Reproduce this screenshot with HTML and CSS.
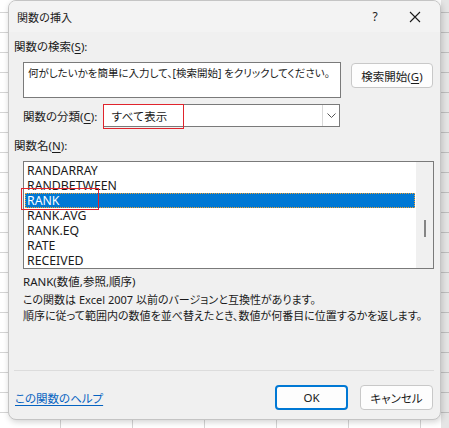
FILE: index.html
```html
<!DOCTYPE html>
<html lang="ja">
  <head>
    <meta charset="UTF-8" />
    <title>関数の挿入</title>
    <link rel="stylesheet" href="styles.css">
  </head>
  <body>
    <div class="dialog">
      <div class="titlebar">
        <span class="title">関数の挿入</span>
        <span class="title-help">?</span>
        <svg class="title-close" width="12" height="12" viewBox="0 0 12 12">
          <path d="M1 1 L11 11 M11 1 L1 11" stroke="#1a1a1a" stroke-width="1.1" fill="none" />
        </svg>
      </div>

      <div class="content">
        <div class="label">関数の検索(<u>S</u>):</div>
        <div class="search-row">
          <div class="search-box">何がしたいかを簡単に入力して、[検索開始] をクリックしてください。</div>
          <button class="button search-button">検索開始(<u>G</u>)</button>
        </div>

        <div class="category-row">
          <span class="category-label">関数の分類(<u>C</u>):</span>
          <div class="select">
            <span class="select-value">すべて表示</span>
            <span class="select-arrow">
              <svg width="9" height="5" viewBox="0 0 9 5">
                <path d="M0.5 0.5 L4.5 4.5 L8.5 0.5" stroke="#555" stroke-width="1" fill="none" />
              </svg>
            </span>
          </div>
        </div>

        <div class="label list-label">関数名(<u>N</u>):</div>
        <div class="listbox">
          <ul class="list-items">
            <li>RANDARRAY</li>
            <li>RANDBETWEEN</li>
            <li class="selected"><span class="mark">RANK</span></li>
            <li>RANK.AVG</li>
            <li>RANK.EQ</li>
            <li>RATE</li>
            <li>RECEIVED</li>
          </ul>
          <div class="scrollbar">
            <div class="scroll-thumb"></div>
          </div>
        </div>

        <div class="signature">RANK(数値,参照,順序)</div>
        <div class="description">
          <p>この関数は Excel 2007 以前のバージョンと互換性があります。</p>
          <p>順序に従って範囲内の数値を並べ替えたとき、数値が何番目に位置するかを返します。</p>
        </div>

        <div class="separator"></div>

        <div class="footer">
          <a class="help-link" href="#">この関数のヘルプ</a>
          <div class="footer-buttons">
            <button class="button button-default">OK</button>
            <button class="button">キャンセル</button>
          </div>
        </div>
      </div>
    </div>
  </body>
</html>
```

FILE: styles.css
```css
:root {
  --dialog-bg: #f0f0f0;
  --title-bg: #f3f3f3;
  --text: #1a1a1a;
  --border: #7a7a7a;
  --control-border: #c8c8c8;
  --accent: #0078d4;
  --link: #0563c1;
  --mark: #e0242c;
  --grid: #d4d4d4;
}

* {
  box-sizing: border-box;
  margin: 0;
  padding: 0;
}

body {
  width: 449px;
  height: 428px;
  overflow: hidden;
  font-family: "Noto Sans", "Noto Sans CJK JP", sans-serif;
  font-size: 12px;
  color: var(--text);
  background-color: #ffffff;
  background-image:
    linear-gradient(to right, rgba(0, 0, 0, 0.1), rgba(0, 0, 0, 0.1)),
    linear-gradient(to right, var(--grid) 1px, transparent 1px),
    linear-gradient(to bottom, var(--grid) 1px, transparent 1px);
  background-size: 8px 100%, 72px 20px, 72px 20px;
  background-position: 441px 0, 60px 12px, 60px 12px;
  background-repeat: no-repeat, repeat, repeat;
}

.dialog {
  margin-left: 8px;
  width: 433px;
  height: 420px;
  background-color: var(--dialog-bg);
  border: 1px solid #c4c4c4;
  border-radius: 8px;
  overflow: hidden;
  box-shadow: 1px 2px 6px rgba(0, 0, 0, 0.18);
  display: flex;
  flex-direction: column;
}

.titlebar {
  height: 31px;
  flex-shrink: 0;
  background-color: var(--title-bg);
  display: flex;
  align-items: center;
  padding-left: 8px;
}

.title {
  font-size: 11px;
  flex: 1;
}

.title-help {
  width: 14px;
  text-align: center;
  font-size: 12px;
  margin-right: 27px;
}

.title-close {
  margin-right: 19px;
}

.content {
  flex: 1;
  padding: 7px 6px 9px 5px;
  display: flex;
  flex-direction: column;
}

.cjk,
.label,
.category-label,
.description,
.help-link,
.button {
  font-feature-settings: "palt";
}

u {
  text-decoration-thickness: 1px;
  text-underline-offset: 2px;
}

.label {
  line-height: 16px;
  font-size: 11.5px;
}

.search-row {
  display: flex;
  align-items: flex-start;
  margin: 7px 0 0 9px;
}

.search-box {
  width: 318px;
  height: 36px;
  background-color: #ffffff;
  border: 1px solid var(--border);
  padding: 2px 4px;
  line-height: 16px;
  font-size: 10.5px;
  font-feature-settings: "palt";
  white-space: nowrap;
  overflow: hidden;
}

.button {
  font-family: inherit;
  font-size: 11.5px;
  color: var(--text);
  background-color: #fdfdfd;
  border: 1px solid var(--control-border);
  border-radius: 4px;
  height: 25px;
}

.search-button {
  margin: 1px 0 0 10px;
  width: 82px;
}

.category-row {
  display: flex;
  align-items: center;
  margin: 6px 0 0 9px;
}

.category-label {
  width: 80px;
  font-size: 11.5px;
  white-space: nowrap;
}

.select {
  width: 237px;
  height: 23px;
  background-color: #ffffff;
  border: 1px solid var(--border);
  display: flex;
  align-items: stretch;
}

.select-value {
  flex: 1;
  display: flex;
  align-items: center;
  position: relative;
  padding-left: 7px;
  font-size: 11.5px;
}

.select-value::after {
  content: "";
  position: absolute;
  left: -1px;
  top: -1px;
  width: 79px;
  height: 23px;
  border: 1.5px solid var(--mark);
}

.select-arrow {
  width: 17px;
  border-left: 1px solid #d8d8d8;
  display: flex;
  align-items: center;
  justify-content: center;
}

.list-label {
  margin-top: 11px;
}

.listbox {
  margin: 7px 0 0 9px;
  width: 411px;
  height: 108px;
  flex-shrink: 0;
  background-color: #ffffff;
  border: 1px solid var(--border);
  display: flex;
}

.list-items {
  list-style: none;
  flex: 1;
  padding: 1px 1px 0 1px;
}

.list-items li {
  height: 15px;
  line-height: 15px;
  padding-left: 2px;
  white-space: nowrap;
  font-size: 12.3px;
}

.list-items .selected {
  background-color: var(--accent);
  color: #ffffff;
  outline: 1px dotted #f0a030;
  outline-offset: -1px;
}

.mark {
  position: relative;
}

.mark::after {
  content: "";
  position: absolute;
  left: -6px;
  top: -4px;
  width: 76px;
  height: 20px;
  border: 1.5px solid var(--mark);
}

.scrollbar {
  width: 17px;
  background-color: var(--dialog-bg);
  display: flex;
  justify-content: center;
  padding-top: 58px;
}

.scroll-thumb {
  width: 2px;
  height: 17px;
  background-color: #858585;
}

.signature {
  margin: 5px 0 0 9px;
  line-height: 16px;
  font-size: 11.5px;
}

.description {
  margin: 2px 0 0 9px;
  line-height: 16px;
  font-size: 11px;
  white-space: nowrap;
}

.separator {
  margin-top: auto;
  height: 1px;
  flex-shrink: 0;
  background-color: #dcdcdc;
}

.footer {
  display: flex;
  align-items: center;
  justify-content: space-between;
  margin-top: 14px;
  padding-left: 1px;
}

.help-link {
  color: var(--link);
  font-size: 11.5px;
  text-underline-offset: 2px;
}

.footer-buttons {
  display: flex;
  gap: 12px;
  margin-right: 1px;
}

.footer-buttons .button {
  width: 73px;
  height: 25px;
}

.button-default {
  border: 2px solid var(--accent);
}
```
